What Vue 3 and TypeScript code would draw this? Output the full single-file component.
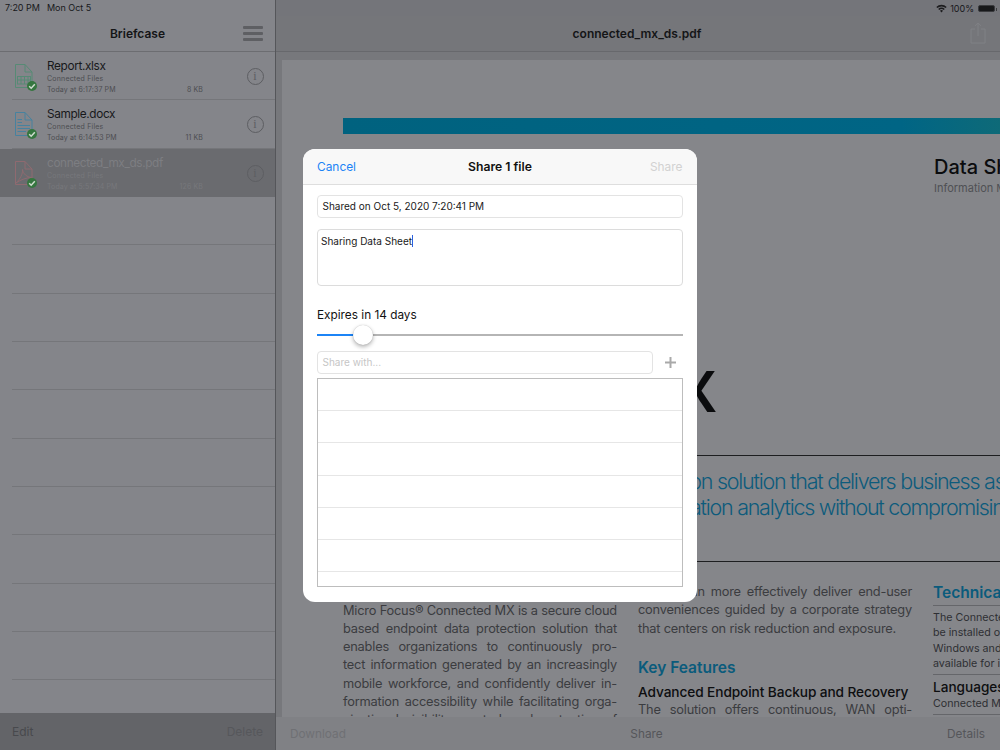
<script setup lang="ts">
interface FileRow { name: string; date: string; size: string; kind: 'xlsx' | 'docx' | 'pdf'; selected?: boolean }
const files: FileRow[] = [
  { name: 'Report.xlsx', date: 'Today at 6:17:37 PM', size: '8 KB', kind: 'xlsx' },
  { name: 'Sample.docx', date: 'Today at 6:14:53 PM', size: '11 KB', kind: 'docx' },
  { name: 'connected_mx_ds.pdf', date: 'Today at 5:57:34 PM', size: '126 KB', kind: 'pdf', selected: true },
]
const emptyRows = Array.from({ length: 11 }, (_, i) => i)
const tableRows = Array.from({ length: 7 }, (_, i) => i)
</script>

<template>
  <div class="ipad">
    <aside class="side">
      <div class="status status-left"><span>7:20 PM</span><span>Mon Oct 5</span></div>
      <header class="side-nav">
        <span class="side-title">Briefcase</span>
        <span class="burger"><i></i><i></i><i></i></span>
      </header>
      <div class="list">
        <div v-for="f in files" :key="f.name" class="row" :class="{ selected: f.selected }">
          <span class="file-icon">
            <svg width="22" height="28" viewBox="0 0 22 28" fill="none" :class="'ico-' + f.kind">
              <path d="M3.5 1.5H13L20 9V24.5H3.5Z" stroke="currentColor" stroke-width="1" />
              <path d="M13 1.5V9H20" stroke="currentColor" stroke-width="1" />
              <g v-if="f.kind === 'xlsx'" stroke="currentColor" stroke-width="1">
                <rect x="5.5" y="13.5" width="13" height="7.5" />
                <path d="M5.5 17H18.5M9 13.5V21M12.5 13.5V21M16 13.5V21" />
              </g>
              <g v-else-if="f.kind === 'docx'" stroke="currentColor" stroke-width="1">
                <path d="M5.5 8.5H10M5.5 11.5H10M5.5 14.5H18M5.5 17.5H18M5.5 20.5H14" />
              </g>
              <path v-else d="M4 23C8 19 11 14 10.5 9.5C11 14 15 17 19.5 17.5C15 17.5 9 19.5 4 23Z" stroke="currentColor" stroke-width="1" />
            </svg>
            <span class="check">
              <svg width="10" height="10" viewBox="0 0 10 10" fill="none"><path d="M2.2 5.2L4.2 7.2L7.8 3.2" stroke="#cfdccf" stroke-width="1.5" /></svg>
            </span>
          </span>
          <div class="row-body">
            <div class="row-name">{{ f.name }}</div>
            <div class="row-sub">Connected Files</div>
            <div class="row-meta"><span>{{ f.date }}</span><span>{{ f.size }}</span></div>
          </div>
          <span class="info">i</span>
        </div>
        <div v-for="n in emptyRows" :key="n" class="empty-row"></div>
      </div>
      <footer class="side-bar"><span>Edit</span><span class="faint">Delete</span></footer>
    </aside>

    <main class="main">
      <div class="status status-right">
        <svg width="11" height="9" viewBox="0 0 11 9"><path d="M0.3 3A7.4 7.4 0 0 1 10.7 3L9.6 4.1A5.9 5.9 0 0 0 1.4 4.1ZM2.2 4.9A4.7 4.7 0 0 1 8.8 4.9L7.7 6A3.2 3.2 0 0 0 3.3 6ZM4 6.8A2.1 2.1 0 0 1 7 6.8L5.5 8.4Z" fill="#1c1c1e" /></svg>
        <span>100%</span>
        <span class="battery"><i></i></span>
      </div>
      <header class="main-nav">
        <span class="main-title">connected_mx_ds.pdf</span>
        <svg class="share-ico" width="16" height="22" viewBox="0 0 16 22" fill="none" stroke="#808185" stroke-width="1">
          <path d="M5 7H1V21H15V7H11" />
          <path d="M8 14V1M5 3.8L8 1L11 3.8" />
        </svg>
      </header>
      <div class="viewer">
        <div class="pdf">
          <div class="pdf-band"></div>
          <div class="pdf-head">
            <div class="ds-title">Data Sheet</div>
            <div class="ds-sub">Information Management &amp; Governance</div>
          </div>
          <div class="pdf-product">Connected MX</div>
          <div class="lead">
            <p class="lead-a">An endpoint protection solution that delivers business as</p>
            <p class="lead-b">well as data preservation analytics without compromising</p>
          </div>
          <div class="cols">
            <div class="col col1">
              <p class="body just">Micro Focus® Connected MX is a secure cloud</p>
              <p class="body just">based endpoint data protection solution that</p>
              <p class="body just">enables organizations to continuously pro-</p>
              <p class="body just">tect information generated by an increasingly</p>
              <p class="body just">mobile workforce, and confidently deliver in-</p>
              <p class="body just">formation accessibility while facilitating orga-</p>
              <p class="body just">nizational visibility, control, and protection of</p>
            </div>
            <div class="col">
              <p class="body just">that IT can more effectively deliver end-user</p>
              <p class="body just">conveniences guided by a corporate strategy</p>
              <p class="body">that centers on risk reduction and exposure.</p>
              <h3 class="kf">Key Features</h3>
              <h4 class="abr">Advanced Endpoint Backup and Recovery</h4>
              <p class="body just">The solution offers continuous, WAN opti-</p>
            </div>
            <div class="col col3">
              <h3 class="tech">Technical Specifications</h3>
              <p class="small">The Connected MX agent can</p>
              <p class="small">be installed on laptops and</p>
              <p class="small">Windows and Mac desktops,</p>
              <p class="small last">available for iOS and Android</p>
              <h4 class="lang">Languages</h4>
              <p class="small tail">Connected MX supports English</p>
            </div>
          </div>
        </div>
      </div>
      <footer class="main-bar"><span class="faint">Download</span><span>Share</span><span>Details</span></footer>
    </main>

    <section class="modal">
      <header class="modal-head">
        <span class="cancel">Cancel</span>
        <span class="modal-title">Share 1 file</span>
        <span class="modal-share">Share</span>
      </header>
      <div class="modal-body">
        <div class="field">Shared on Oct 5, 2020 7:20:41 PM</div>
        <div class="note">Sharing Data Sheet<span class="caret"></span></div>
        <div class="expires">Expires in 14 days</div>
        <div class="slider"><span class="fill"></span><span class="thumb"></span></div>
        <div class="share-row">
          <div class="field with">Share with...</div>
          <svg width="13" height="13" viewBox="0 0 13 13"><path d="M6.5 1V12M1 6.5H12" stroke="#a9a9a9" stroke-width="2" /></svg>
        </div>
        <div class="table">
          <div v-for="n in tableRows" :key="n" class="t-row"></div>
        </div>
      </div>
    </section>
  </div>
</template>

<style>
html, body { margin: 0; background: #85868a; }
</style>

<style scoped>
.ipad {
  position: relative;
  display: flex;
  width: 1000px;
  height: 750px;
  overflow: hidden;
  font-family: Inter, "Liberation Sans", sans-serif;
  background: #85868a;
  color: #111214;
}
p, h3, h4 { margin: 0; font-weight: normal; }

/* sidebar */
.side {
  flex: 0 0 275px;
  width: 275px;
  height: 750px;
  display: flex;
  flex-direction: column;
  background: #84858a;
  border-right: 1.5px solid #55565a;
  box-sizing: content-box;
}
.status { font-size: 9px; line-height: 14px; color: #17181a; flex: none; }
.status-left { display: flex; gap: 7px; padding-left: 5px; box-sizing: content-box; height: 15px; padding-top: 1px; }
.side-nav {
  flex: none;
  height: 36px;
  position: relative;
  display: flex;
  align-items: center;
  justify-content: center;
  border-bottom: 1px solid #6c6d71;
  box-sizing: border-box;
  padding-right: 0;
}
.side-title { font-size: 12px; font-weight: 600; color: #141517; }
.burger { position: absolute; right: 12px; top: 10px; display: flex; flex-direction: column; gap: 3px; }
.burger i { display: block; width: 20px; height: 3px; border-radius: 1px; background: #5e5f63; }
.list { flex: 1; overflow: hidden; }
.row { position: relative; height: 48.3px; display: flex; box-sizing: border-box; padding-left: 47px; }
.row::after { content: ""; position: absolute; left: 12px; right: 0; bottom: 0; height: 1px; background: #75767a; }
.row.selected { background: #6a6b6f; }
.row.selected::after { display: none; }
.file-icon { position: absolute; left: 12px; top: 11px; width: 22px; height: 28px; }
.ico-xlsx { color: #578a75; }
.ico-docx { color: #47829f; }
.ico-pdf { color: #8f6a70; }
.check {
  position: absolute;
  left: 14.5px;
  top: 18px;
  width: 10px;
  height: 10px;
  border-radius: 50%;
  background: #35763f;
  display: flex;
}
.row-body { flex: 0 0 156px; width: 156px; padding-top: 7px; }
.row-name { font-size: 11.8px; line-height: 15px; letter-spacing: -0.36px; color: #17181a; }
.row-sub { font-size: 7px; line-height: 10px; margin-top: 0; color: #4c4d51; letter-spacing: 0.2px; }
.row-meta { display: flex; justify-content: space-between; font-size: 7px; line-height: 10px; margin-top: 1px; color: #4c4d51; letter-spacing: 0.12px; }
.selected .row-name { color: #7d7e82; }
.selected .row-sub, .selected .row-meta { color: #77787c; }
.info {
  position: absolute;
  right: 11.5px;
  top: 16px;
  width: 15px;
  height: 15px;
  border: 1px solid #5d5e62;
  border-radius: 50%;
  color: #5d5e62;
  font-family: "Liberation Serif", serif;
  font-size: 12px;
  line-height: 15px;
  text-align: center;
}
.empty-row { height: 48.35px; margin-left: 12px; border-bottom: 1px solid #75767a; box-sizing: border-box; }
.side-bar {
  flex: none;
  height: 37px;
  display: flex;
  justify-content: space-between;
  align-items: center;
  padding: 0 12px;
  background: #636468;
  font-size: 12px;
  color: #48494d;
}
.side-bar .faint { color: #56575b; }

/* main */
.main { flex: 1; min-width: 0; display: flex; flex-direction: column; position: relative; background: #77787c; }
.status-right {
  display: flex;
  align-items: center;
  justify-content: flex-end;
  gap: 3px;
  height: 15px;
  padding: 1px 5px 0 0;
  box-sizing: content-box;
  background: #74757a;
}
.battery { position: relative; width: 17px; height: 7px; border-radius: 2px; background: #17181a; margin-left: 1px; border: 0.5px solid #3a3b3e; box-sizing: border-box; }
.battery i { position: absolute; right: -2.5px; top: 1.5px; width: 1px; height: 3px; background: #3a3b3e; }
.main-nav {
  flex: none;
  height: 36px;
  display: flex;
  align-items: center;
  justify-content: center;
  position: relative;
  background: #75767a;
  border-bottom: 1px solid #67686c;
  box-sizing: border-box;
  padding-right: 2px;
}
.main-title { font-size: 12px; font-weight: 600; color: #141517; }
.share-ico { position: absolute; right: 14px; top: 6px; }
.viewer { flex: 1; min-height: 0; padding: 8px 0 0 5.5px; overflow: hidden; background: #77787c; }
.pdf { height: 700px; background: #85868a; padding: 58px 0 0 61.5px; overflow: hidden; box-sizing: border-box; white-space: nowrap; }
.pdf-band { height: 16px; background: linear-gradient(90deg, #00627f 0%, #006585 85%, #0e6a78 100%); }
.pdf-head { margin: 21px 0 0 591px; height: 72px; }
.ds-title { font-size: 20px; line-height: 25px; font-weight: 500; color: #0b0c0e; }
.ds-sub { font-size: 11px; line-height: 15px; margin-top: 1px; color: #4f5054; }
.pdf-product { font-size: 56px; line-height: 70px; font-weight: 600; margin-top: 130px; height: 98px; color: #0b0c0e; letter-spacing: -1.7px; margin-left: -10px; }
.lead { border-top: 1.2px solid #1d1e20; border-bottom: 1.2px solid #1d1e20; height: 107px; box-sizing: border-box; padding-top: 13px; }
.lead p { font-size: 21.5px; line-height: 25.6px; color: #0d5b7c; letter-spacing: -1.25px; font-weight: 300; }
.lead-a { padding-left: 169px; }
.lead-b { padding-left: 172px; }
.cols { display: flex; gap: 21px; padding-top: 21px; }
.col { flex: 0 0 274px; width: 274px; }
.col1 { padding-top: 18.6px; }
.col3 { flex-basis: 200px; width: 200px; }
.body { font-size: 12.8px; line-height: 18.3px; letter-spacing: -0.2px; color: #3b3c40; white-space: normal; }
.just { text-align: justify; text-align-last: justify; }
.kf { font-size: 15.5px; line-height: 20px; font-weight: 600; color: #0a5b7c; margin-top: 20px; }
.abr { font-size: 13.7px; line-height: 18px; font-weight: 500; color: #0d0e10; margin-top: 5px; letter-spacing: -0.1px; }
.tech { font-size: 15.5px; line-height: 20px; font-weight: 600; color: #0a5b7c; border-bottom: 1px solid #65666a; padding-bottom: 2px; }
.small { font-size: 10.7px; line-height: 15.3px; color: #2e2f33; }
.col3 .small:first-of-type { margin-top: 4px; }
.small.last { border-bottom: 1px solid #65666a; padding-bottom: 3px; }
.lang { font-size: 13.6px; line-height: 18px; font-weight: 500; color: #0d0e10; margin-top: 3px; }
.small.tail { border-bottom: 1px solid #65666a; padding-bottom: 3px; }
.main-bar {
  position: absolute;
  left: 0;
  right: 0;
  bottom: 0;
  height: 33px;
  background: #808185;
  display: flex;
  justify-content: space-between;
  align-items: center;
  padding: 0 15px 0 14px;
  font-size: 11.8px;
  color: #55565a;
}
.main-bar .faint { color: #6f7074; }

/* modal */
.modal {
  position: absolute;
  left: 303px;
  top: 149px;
  width: 394px;
  height: 453px;
  border-radius: 12px;
  background: #fff;
  overflow: hidden;
}
.modal-head {
  height: 36px;
  display: flex;
  align-items: center;
  justify-content: space-between;
  padding: 0 14.5px 0 14px;
  background: #f8f8f8;
  border-bottom: 1px solid #dedede;
  box-sizing: border-box;
  font-size: 11.9px;
  position: relative;
}
.cancel { color: #1c84f6; }
.modal-title { font-weight: 600; font-size: 12.2px; color: #111; position: absolute; left: 0; right: 0; text-align: center; }
.modal-share { color: #d2d2d2; }
.modal-body { padding: 10px 14px 0; }
.field {
  height: 22.5px;
  border: 1px solid #e3e3e3;
  border-radius: 4px;
  box-sizing: border-box;
  padding-left: 4.5px;
  font-size: 10px;
  line-height: 21px;
  color: #1a1a1a;
}
.note {
  height: 57px;
  margin-top: 11.5px;
  border: 1px solid #dcdcdc;
  border-radius: 4px;
  box-sizing: border-box;
  padding: 5px 0 0 3px;
  font-size: 10px;
  line-height: 13px;
  color: #1a1a1a;
}
.caret { display: inline-block; width: 1px; height: 12px; background: #2c62e0; vertical-align: -2px; }
.expires { margin-top: 21.5px; font-size: 11.8px; line-height: 15px; color: #111; }
.slider { position: relative; height: 2px; background: #b5b5b5; margin-top: 11.5px; }
.fill { position: absolute; left: 0; top: 0; height: 2px; width: 37px; background: #1c84f6; }
.thumb {
  position: absolute;
  left: 36px;
  top: -9.5px;
  width: 20px;
  height: 20px;
  border-radius: 50%;
  background: #fff;
  box-shadow: 0 2px 4px rgba(0, 0, 0, 0.3), 0 0 1px rgba(0, 0, 0, 0.25);
}
.share-row { display: flex; align-items: center; justify-content: space-between; margin-top: 15px; padding-right: 6px; }
.field.with { width: 336px; color: #c6c6c6; flex: none; line-height: 20px; }
.table { height: 209px; margin-top: 4.5px; border: 1px solid #bdbdbd; box-sizing: border-box; overflow: hidden; border-top-width: 1.5px; }
.t-row { height: 32.2px; border-bottom: 1px solid #e6e6e6; box-sizing: border-box; }
</style>
